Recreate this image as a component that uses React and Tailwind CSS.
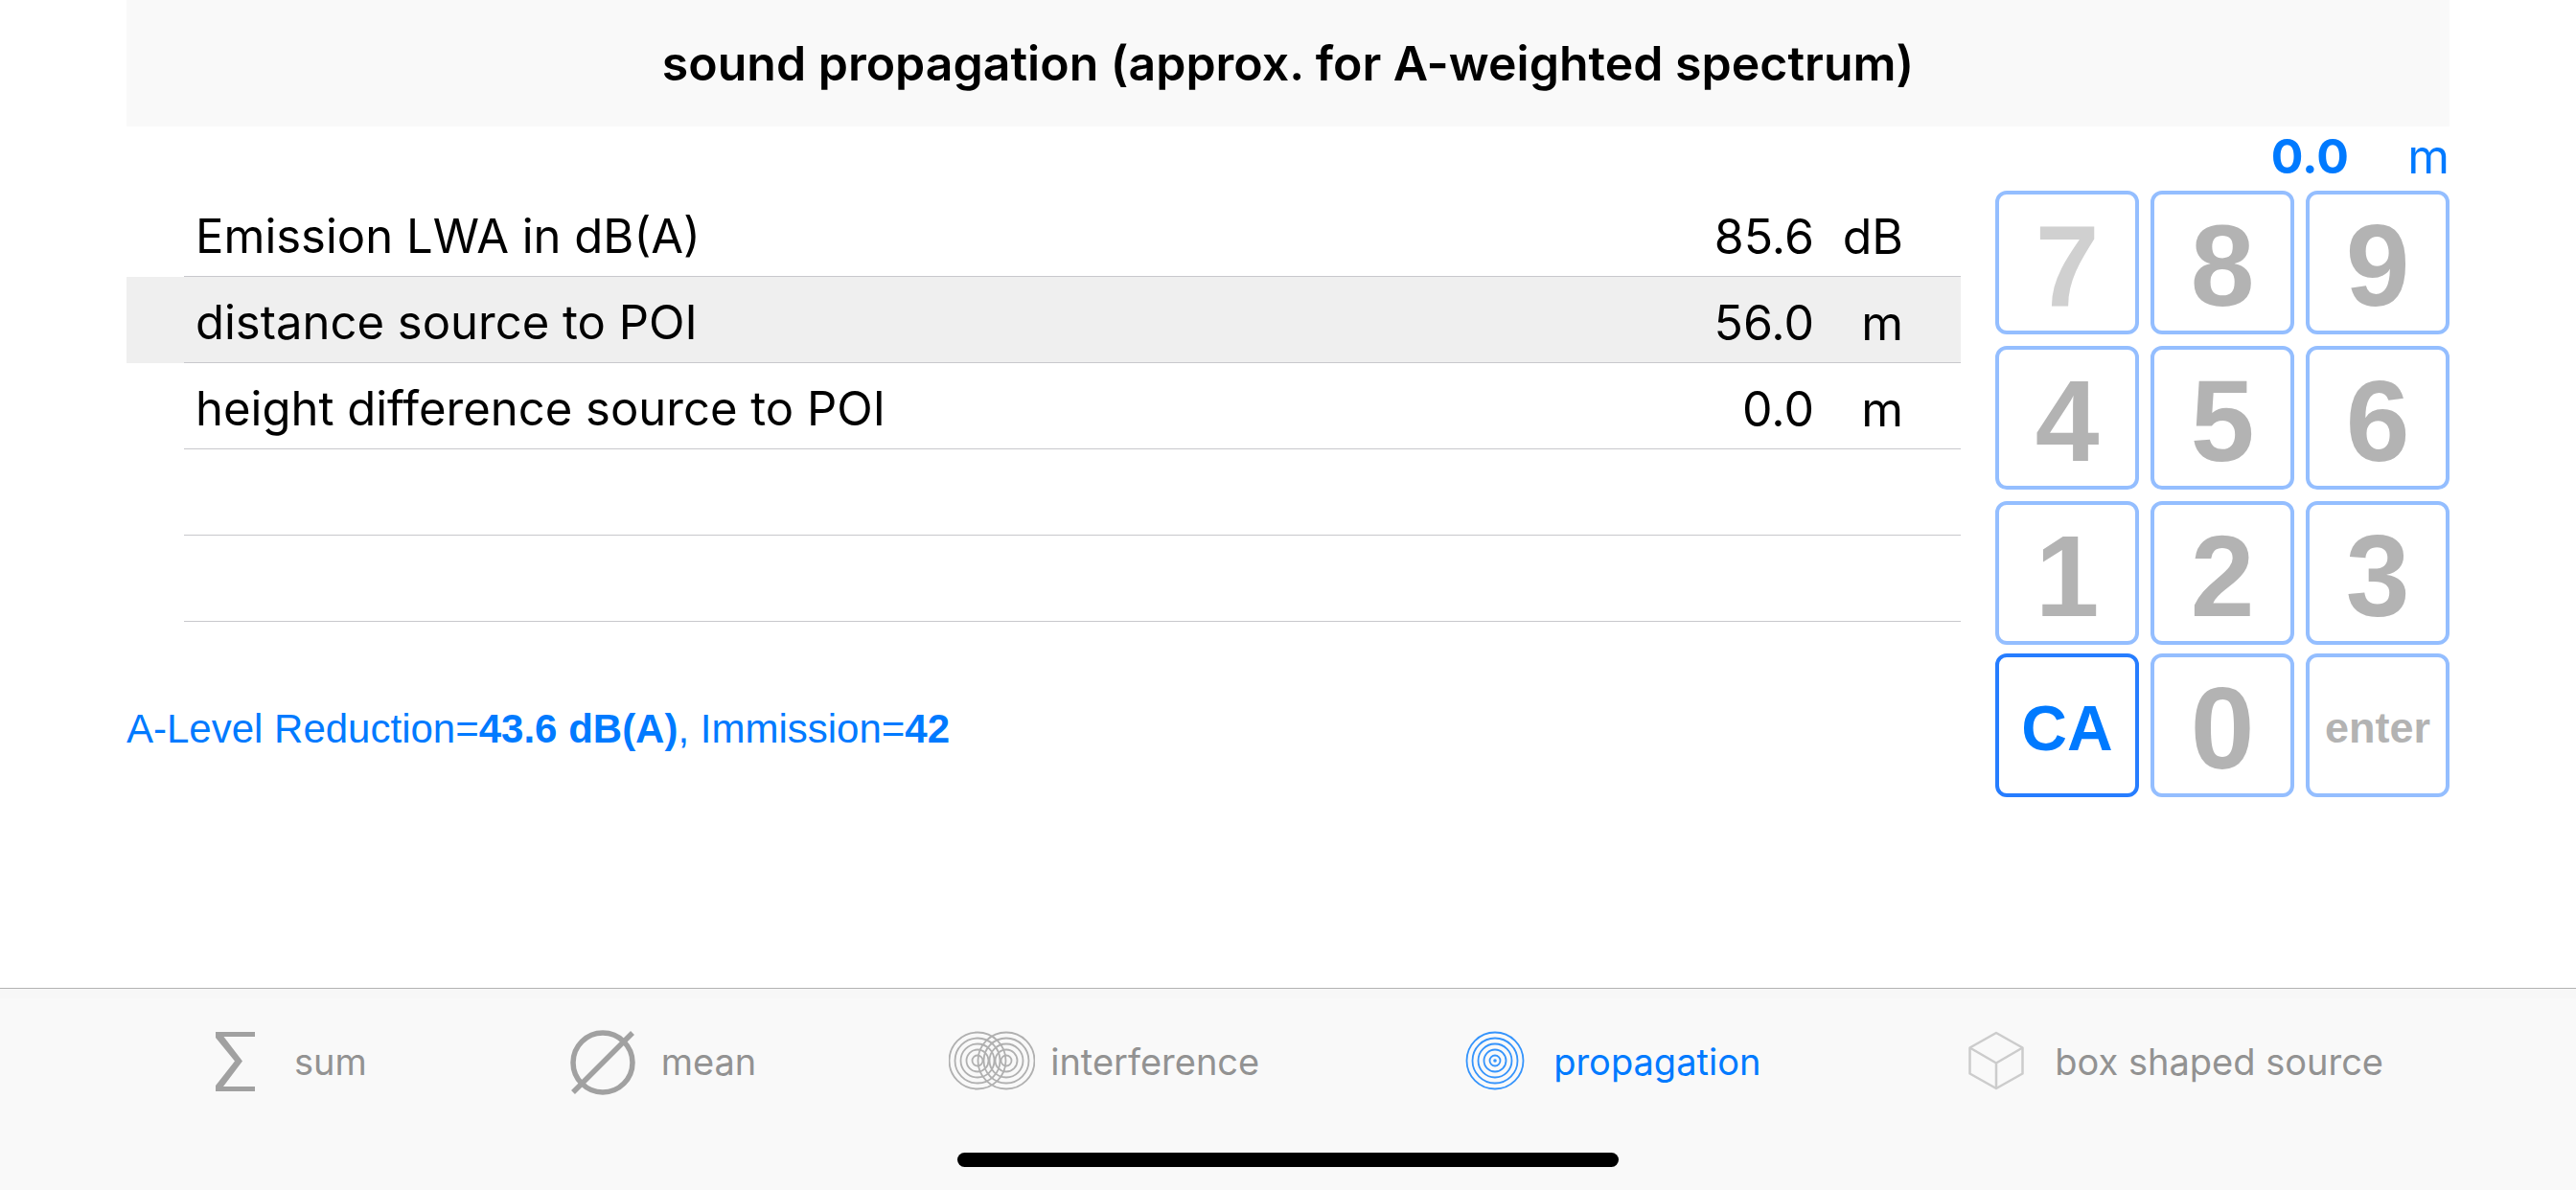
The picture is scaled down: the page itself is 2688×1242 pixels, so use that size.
import { useState } from 'react';
import clsx from 'clsx';

const rows = [
    { label: 'Emission LWA in dB(A)', value: '85.6', unit: 'dB' },
    { label: 'distance source to POI', value: '56.0', unit: 'm' },
    { label: 'height difference source to POI', value: '0.0', unit: 'm' },
    { label: '', value: '', unit: '' },
    { label: '', value: '', unit: '' },
];

const rings = [5.5, 11.5, 17.5, 23.5, 29.5];

function SumIcon() {
    return (
        <svg className="w-[90px] h-[72px] text-[#a1a1a1]" viewBox="0 0 90 72" fill="currentColor" aria-hidden="true">
            <path d="M24 5h41v5H32.500L52 35.500L32 62h33v5H24v-6l20-25.500L24 11z" />
        </svg>
    );
}

function MeanIcon() {
    return (
        <svg className="w-[90px] h-[72px] text-[#a1a1a1]" viewBox="0 0 90 72" fill="none" stroke="currentColor" aria-hidden="true">
            <circle cx="45" cy="37" r="31" strokeWidth="5.500" />
            <path d="M14 68L76 6" strokeWidth="5.500" />
        </svg>
    );
}

function InterferenceIcon() {
    return (
        <svg className="w-[90px] h-[72px] text-[#b0b0b0]" viewBox="0 0 90 72" fill="none" stroke="currentColor" strokeWidth="1.800" aria-hidden="true">
            {rings.map((r) => <circle key={`l${r}`} cx="30" cy="35" r={r} />)}
            {rings.map((r) => <circle key={`r${r}`} cx="60" cy="35" r={r} />)}
        </svg>
    );
}

function PropagationIcon() {
    return (
        <svg className="w-[90px] h-[72px] text-[#3594fc]" viewBox="0 0 90 72" fill="none" stroke="currentColor" strokeWidth="1.800" aria-hidden="true">
            {rings.map((r) => <circle key={r} cx="45" cy="35" r={r} />)}
            <circle cx="45" cy="35" r="1.800" fill="currentColor" stroke="none" />
        </svg>
    );
}

function BoxIcon() {
    return (
        <svg className="w-[90px] h-[72px] text-[#cccccc]" viewBox="0 0 90 72" fill="none" stroke="currentColor" strokeWidth="2.500" strokeLinejoin="round" aria-hidden="true">
            <path d="M45 6L72.500 21.500V48.500L45 64L17.500 48.500V21.500Z" />
            <path d="M17.500 21.500L45 37.500L72.500 21.500M45 37.500V64" />
        </svg>
    );
}

const tabs = [
    { name: 'sum', Icon: SumIcon },
    { name: 'mean', Icon: MeanIcon },
    { name: 'interference', Icon: InterferenceIcon },
    { name: 'propagation', Icon: PropagationIcon },
    { name: 'box shaped source', Icon: BoxIcon },
];

function Key({ children, className }) {
    return (
        <button
            type="button"
            className={clsx(
                'h-[150px] pt-1.5 rounded-xl border-4 flex items-center justify-center font-["Liberation_Sans",sans-serif] font-bold',
                className
            )}
        >
            {children}
        </button>
    );
}

function Keypad() {
    return (
        <div className="w-[474px] shrink-0">
            {/* Current entry */}
            <div className="h-[67px] pb-1.5 flex items-center justify-end text-[50px] leading-[60px] text-[#007aff]">
                <output className="font-bold">0.0</output>
                <span className="w-[105px] text-right">m</span>
            </div>

            <div className="grid grid-cols-3 gap-3">
                {['7', '8', '9', '4', '5', '6', '1', '2', '3'].map((digit) => (
                    <Key
                        key={digit}
                        className={clsx('border-[#94beff] text-[120px]', digit === '7' ? 'text-[#d0d0d0]' : 'text-[#b3b3b3]')}
                    >
                        {digit}
                    </Key>
                ))}
            </div>
            <div className="grid grid-cols-3 gap-3 mt-[9px]">
                <Key className="border-[#267dff] text-[66px] text-[#007aff]">CA</Key>
                <Key className="border-[#94beff] text-[120px] text-[#b3b3b3]">0</Key>
                <Key className="border-[#94beff] text-[45px] text-[#b3b3b3]">enter</Key>
            </div>
        </div>
    );
}

export default function App() {
    const [selected, setSelected] = useState(1);
    const [activeTab, setActiveTab] = useState('propagation');

    return (
        <div className='min-h-screen flex flex-col bg-white text-black font-["Inter",sans-serif]'>
            <header className="mx-[132px] h-[132px] bg-[#f9f9f9] flex items-center justify-center">
                <h1 className="text-[50px] leading-[60px] font-semibold">
                    sound propagation (approx. for A-weighted spectrum)
                </h1>
            </header>

            <main className="mx-[132px] flex flex-1 items-start gap-9">
                <div className="flex-1 pt-[67px]">
                    <table className="w-full border-separate border-spacing-0 text-[50px] leading-[60px]">
                        <tbody>
                            {rows.map((row, index) => (
                                <tr
                                    key={index}
                                    onClick={() => row.label && setSelected(index)}
                                    className={clsx(index === selected && 'bg-[#efefef]')}
                                >
                                    <td className="w-[60px] h-[90px] p-0" />
                                    <th scope="row" className="h-[90px] p-0 pt-1.5 pl-3 text-left text-[49px] font-normal border-b border-[#c8c8cc]">
                                        {row.label}
                                    </th>
                                    <td className="w-[200px] h-[90px] p-0 pt-1.5 text-right border-b border-[#c8c8cc]">{row.value}</td>
                                    <td className="w-[153px] h-[90px] p-0 pt-1.5 pr-[60px] text-right border-b border-[#c8c8cc]">{row.unit}</td>
                                </tr>
                            ))}
                        </tbody>
                    </table>

                    <p className='mt-[88px] text-[42px] leading-[48px] text-[#007aff] font-["Liberation_Sans",sans-serif]'>
                        A-Level Reduction=<b>43.6 dB(A)</b>, Immission=<b>42</b>
                    </p>
                </div>

                <Keypad />
            </main>

            {/* Tab bar */}
            <footer className="border-t border-[#b2b2b2] bg-[#f9f9f9]">
                <div className="h-2.5 bg-[#f7f7f7]" />
                <nav className="pt-[30px] flex justify-evenly">
                    {tabs.map(({ name, Icon }) => (
                        <button
                            key={name}
                            type="button"
                            onClick={() => setActiveTab(name)}
                            className={clsx(
                                'flex items-center gap-4 text-[38px] leading-[48px]',
                                name === activeTab ? 'text-[#007aff]' : 'text-[#929292]'
                            )}
                        >
                            <Icon />
                            {name}
                        </button>
                    ))}
                </nav>
                <div className="mx-auto mt-[59px] mb-6 w-[690px] h-[15px] rounded-full bg-black" />
            </footer>
        </div>
    );
}
